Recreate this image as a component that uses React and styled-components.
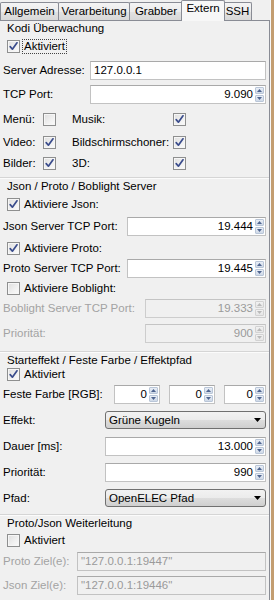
import React from 'react';
import styled, { createGlobalStyle } from 'styled-components';

const Global = createGlobalStyle`
  html, body { margin: 0; padding: 0; background: #f0f0f0; }
  body {
    width: 274px; height: 600px; overflow: hidden;
    font-family: "Liberation Sans", Arial, sans-serif;
    font-size: 11.5px; color: #000;
  }
  * { box-sizing: border-box; }
`;

const Window = styled.div`
  display: flex;
  width: 274px;
  height: 600px;
`;

const Main = styled.div`
  width: 270px;
  display: flex;
  flex-direction: column;
`;

const Edge = styled.div`
  width: 4px;
  border-left: 1px solid #f7f7f7;
  background: #c39d70;
`;

const TabBar = styled.div`
  display: flex;
  height: 20px;
  align-items: flex-end;
  position: relative;
  z-index: 2;
`;

const Tab = styled.div`
  width: ${p => p.$w}px;
  height: ${p => (p.$active ? 21 : 18)}px;
  margin-left: ${p => (p.$first ? 0 : p.$active ? -2 : -1)}px;
  margin-right: ${p => (p.$active ? -1 : 0)}px;
  margin-bottom: ${p => (p.$active ? -1 : 0)}px;
  border: 1px solid #898c95;
  border-bottom: none;
  border-radius: 2px 2px 0 0;
  background: ${p =>
    p.$active
      ? '#f7f7f7'
      : 'linear-gradient(#f4f4f4 0%, #ececec 50%, #e2e2e2 51%, #d8d8d8 100%)'};
  text-align: center;
  line-height: 14px;
  padding-top: ${p => (p.$active ? 0 : 1)}px;
  position: relative;
  z-index: ${p => (p.$active ? 2 : 1)};
  white-space: nowrap;
`;

const Page = styled.div`
  flex: 1;
  border-top: 1px solid #898c95;
  border-right: 1px solid #898c95;
  background: #f0f0f0;
  display: flex;
  flex-direction: column;
`;

const Group = styled.section`
  display: flex;
  flex-direction: column;
  padding: 0 3px ${p => p.$pb || 0}px 3px;
  border-top: 1px solid ${p => (p.$noLine ? 'transparent' : '#d5d5d5')};
  box-shadow: ${p => (p.$noLine ? 'none' : 'inset 0 1px 0 #fbfbfb')};
`;

const Title = styled.div`
  height: ${p => p.$h}px;
  display: flex;
  align-items: center;
  padding-left: 4px;
  white-space: nowrap;
`;

const Row = styled.div`
  height: ${p => p.$h}px;
  display: flex;
  align-items: center;
  padding-left: ${p => p.$indent || 0}px;
`;

const FieldRow = styled.div`
  height: ${p => p.$h}px;
  display: grid;
  grid-template-columns: ${p => p.$label}px 1fr;
  align-items: center;
`;

const RgbRow = styled.div`
  height: ${p => p.$h}px;
  display: grid;
  grid-template-columns: 102px 46px 46px 1fr;
  column-gap: 9px;
  align-items: center;
`;

const ToggleGrid = styled.div`
  height: ${p => p.$h}px;
  display: grid;
  grid-template-columns: 40px 13px 16px 101px 13px;
  align-items: center;
`;

const Label = styled.span`
  white-space: nowrap;
  color: ${p => (p.$disabled ? '#a3a3a3' : '#000')};
`;

const CheckWrap = styled.span`
  display: inline-flex;
  align-items: center;
  gap: 3px;
`;

const Box = styled.span`
  width: 13px;
  height: 13px;
  border: 1px solid #8e8f8f;
  background: linear-gradient(135deg, #dedede 0%, #f1f1f1 60%, #fbfbfb 100%);
  box-shadow: inset 0 0 0 1px #f6f6f6;
  display: inline-flex;
  align-items: center;
  justify-content: center;
`;

const CheckText = styled.span`
  white-space: nowrap;
  padding: 0 1px;
  outline: ${p => (p.$focus ? '1px dotted #444' : 'none')};
  line-height: 13px;
`;

const Edit = styled.div`
  height: 19px;
  border: 1px solid #c2c2c2;
  border-top-color: #a9a9a9;
  background: ${p => (p.$disabled ? '#f0f0f0' : '#fff')};
  color: ${p => (p.$disabled ? '#9a9a9a' : '#000')};
  padding: 0 3px;
  line-height: 17px;
  white-space: nowrap;
  overflow: hidden;
`;

const SpinFrame = styled.div`
  height: 19px;
  display: flex;
  border: 1px solid ${p => (p.$disabled ? '#cdcdcd' : '#c2c2c2')};
  border-top-color: ${p => (p.$disabled ? '#c4c4c4' : '#a9a9a9')};
  background: ${p => (p.$disabled ? '#f0f0f0' : '#fff')};
`;

const SpinValue = styled.div`
  flex: 1;
  text-align: right;
  padding-right: 2px;
  line-height: 17px;
  color: ${p => (p.$disabled ? '#9a9a9a' : '#000')};
  white-space: nowrap;
`;

const SpinButtons = styled.div`
  width: 10px;
  display: flex;
  flex-direction: column;
  padding: 1px 1px 1px 0;
  gap: 1px;
`;

const SpinBtn = styled.div`
  flex: 1;
  display: flex;
  align-items: center;
  justify-content: center;
  border-radius: 1px;
  background: ${p =>
    p.$disabled
      ? 'linear-gradient(#f1f1f1, #e6e6e6)'
      : 'linear-gradient(#e9eef6, #cfd9e7)'};
  border: 1px solid ${p => (p.$disabled ? '#d2d2d2' : '#b9c6d8')};
`;

const Combo = styled.div`
  height: 18px;
  display: flex;
  align-items: center;
  justify-content: space-between;
  border: 1px solid #707070;
  border-radius: 3px;
  background: linear-gradient(#f2f2f2 0%, #ebebeb 50%, #dddddd 51%, #cfcfcf 100%);
  padding: 0 4px 0 3px;
  white-space: nowrap;
`;

function Check({ checked, label, focus }) {
  return (
    <CheckWrap>
      <Box>
        {checked && (
          <svg width="11" height="11" viewBox="0 0 11 11">
            <path d="M2.2 5.6 L4.4 8.2 L9 1.8" fill="none" stroke="#3a4c8c" strokeWidth="1.7" strokeLinecap="round" strokeLinejoin="round" />
          </svg>
        )}
      </Box>
      {label && <CheckText $focus={focus}>{label}</CheckText>}
    </CheckWrap>
  );
}

function Tri({ up, disabled }) {
  const c = disabled ? '#b9b9b9' : '#4f6590';
  return (
    <svg width="5" height="3" viewBox="0 0 5 3">
      <path d={up ? 'M0 3 L2.5 0 L5 3 Z' : 'M0 0 L2.5 3 L5 0 Z'} fill={c} />
    </svg>
  );
}

function Spin({ value, disabled }) {
  return (
    <SpinFrame $disabled={disabled}>
      <SpinValue $disabled={disabled}>{value}</SpinValue>
      <SpinButtons>
        <SpinBtn $disabled={disabled}><Tri up disabled={disabled} /></SpinBtn>
        <SpinBtn $disabled={disabled}><Tri disabled={disabled} /></SpinBtn>
      </SpinButtons>
    </SpinFrame>
  );
}

function Select({ value }) {
  return (
    <Combo>
      <span>{value}</span>
      <svg width="7" height="4" viewBox="0 0 7 4">
        <path d="M0 0 L7 0 L3.5 4 Z" fill="#000" />
      </svg>
    </Combo>
  );
}

const tabs = [
  { label: 'Allgemein', w: 59 },
  { label: 'Verarbeitung', w: 72 },
  { label: 'Grabber', w: 54 },
  { label: 'Extern', w: 44, active: true },
  { label: 'SSH', w: 29 },
];

export default function App() {
  return (
    <>
      <Global />
      <Window>
        <Main>
          <TabBar>
            {tabs.map((t, i) => (
              <Tab key={t.label} $w={t.w} $active={t.active} $first={i === 0}>
                {t.label}
              </Tab>
            ))}
          </TabBar>
          <Page>
            <Group $noLine $pb={4}>
              <Title $h={11}>Kodi Überwachung</Title>
              <Row $h={26} $indent={4}><Check checked label="Aktiviert" focus /></Row>
              <FieldRow $h={22} $label={87}>
                <Label>Server Adresse:</Label>
                <Edit>127.0.0.1</Edit>
              </FieldRow>
              <FieldRow $h={26} $label={87}>
                <Label>TCP Port:</Label>
                <Spin value="9.090" />
              </FieldRow>
              <ToggleGrid $h={24}>
                <Label>Menü:</Label><Check /><span /><Label>Musik:</Label><Check checked />
              </ToggleGrid>
              <ToggleGrid $h={22}>
                <Label>Video:</Label><Check checked /><span /><Label>Bildschirmschoner:</Label><Check checked />
              </ToggleGrid>
              <ToggleGrid $h={20}>
                <Label>Bilder:</Label><Check checked /><span /><Label>3D:</Label><Check checked />
              </ToggleGrid>
            </Group>

            <Group $pb={3}>
              <Title $h={16}>Json / Proto / Boblight Server</Title>
              <Row $h={20} $indent={4}><Check checked label="Aktiviere Json:" /></Row>
              <FieldRow $h={24} $label={124}>
                <Label>Json Server TCP Port:</Label>
                <Spin value="19.444" />
              </FieldRow>
              <Row $h={20} $indent={4}><Check checked label="Aktiviere Proto:" /></Row>
              <FieldRow $h={20} $label={124}>
                <Label>Proto Server TCP Port:</Label>
                <Spin value="19.445" />
              </FieldRow>
              <Row $h={20} $indent={4}><Check label="Aktiviere Boblight:" /></Row>
              <FieldRow $h={20} $label={142}>
                <Label $disabled>Boblight Server TCP Port:</Label>
                <Spin value="19.333" disabled />
              </FieldRow>
              <FieldRow $h={30} $label={142}>
                <Label $disabled>Priorität:</Label>
                <Spin value="900" disabled />
              </FieldRow>
            </Group>

            <Group $pb={3}>
              <Title $h={16}>Starteffekt / Feste Farbe / Effektpfad</Title>
              <Row $h={13} $indent={4}><Check checked label="Aktiviert" /></Row>
              <RgbRow $h={26}>
                <Label>Feste Farbe [RGB]:</Label>
                <Spin value="0" />
                <Spin value="0" />
                <Spin value="0" />
              </RgbRow>
              <FieldRow $h={26} $label={102}>
                <Label>Effekt:</Label>
                <Select value="Grüne Kugeln" />
              </FieldRow>
              <FieldRow $h={26} $label={102}>
                <Label>Dauer [ms]:</Label>
                <Spin value="13.000" />
              </FieldRow>
              <FieldRow $h={26} $label={102}>
                <Label>Priorität:</Label>
                <Spin value="990" />
              </FieldRow>
              <FieldRow $h={26} $label={102}>
                <Label>Pfad:</Label>
                <Select value="OpenELEC Pfad" />
              </FieldRow>
            </Group>

            <Group $pb={4}>
              <Title $h={16}>Proto/Json Weiterleitung</Title>
              <Row $h={18} $indent={4}><Check label="Aktiviert" /></Row>
              <FieldRow $h={24} $label={74}>
                <Label $disabled>Proto Ziel(e):</Label>
                <Edit $disabled>"127.0.0.1:19447"</Edit>
              </FieldRow>
              <FieldRow $h={24} $label={74}>
                <Label $disabled>Json Ziel(e):</Label>
                <Edit $disabled>"127.0.0.1:19446"</Edit>
              </FieldRow>
            </Group>
          </Page>
        </Main>
        <Edge />
      </Window>
    </>
  );
}
